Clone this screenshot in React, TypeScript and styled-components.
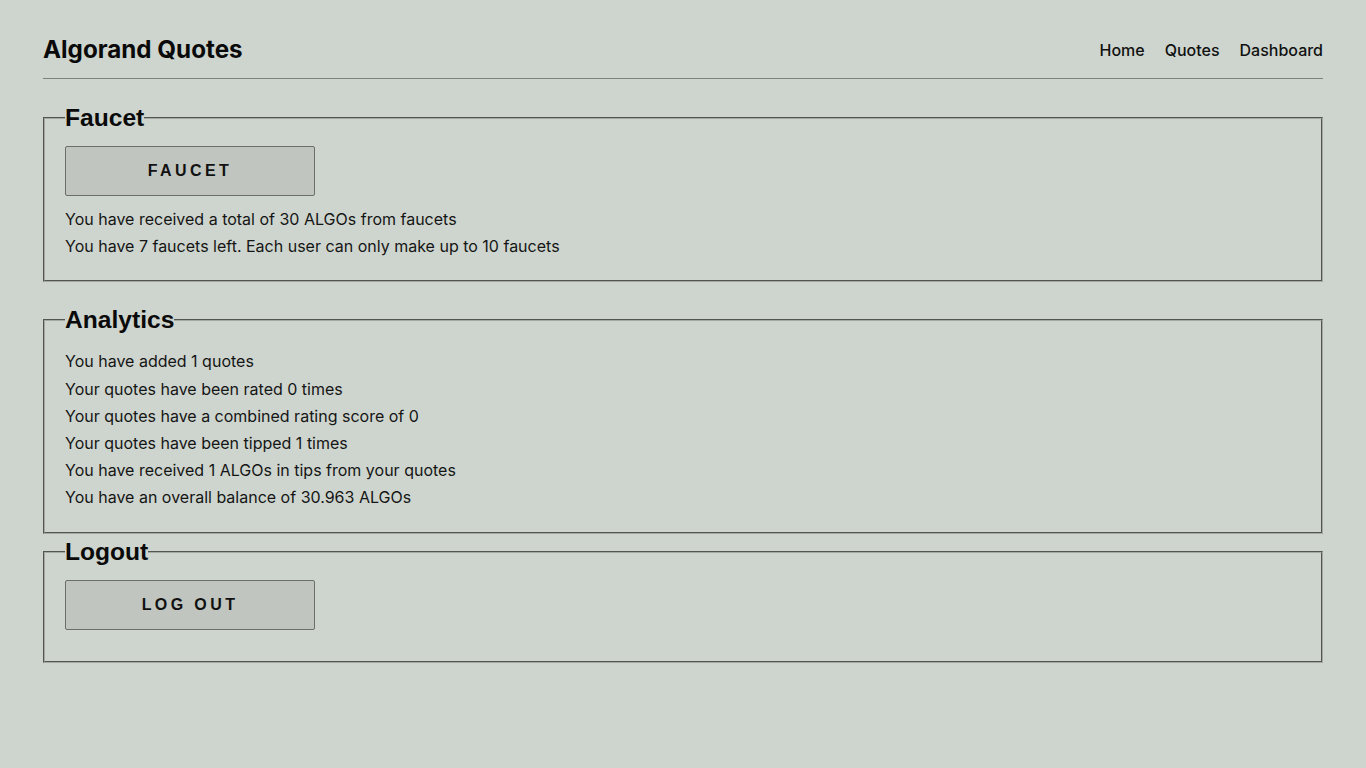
import * as React from 'react';
import styled, { createGlobalStyle } from 'styled-components';

const GlobalStyle = createGlobalStyle`
  html, body {
    margin: 0;
    padding: 0;
    background: #ced5ce;
  }
  body {
    font-family: Inter, "Noto Sans", sans-serif;
    color: #111;
  }
`;

const Page = styled.div`
  max-width: 1280px;
  margin: 0 auto;
  padding-top: 35px;
`;

const Header = styled.header`
  display: flex;
  align-items: center;
  justify-content: space-between;
  padding-bottom: 13px;
  border-bottom: 1px solid #7b817b;
  margin-bottom: 25px;
`;

const Brand = styled.h1`
  margin: 0;
  font-size: 24.2px;
  line-height: 30px;
  font-weight: 700;
  color: #0a0a0a;
`;

const Nav = styled.nav`
  display: flex;
  gap: 20px;
`;

const NavLink = styled.a`
  font-size: 16px;
  font-weight: 500;
  color: #111;
  text-decoration: none;
  cursor: pointer;
`;

const Section = styled.fieldset<{ $gap?: number; $bottom?: number }>`
  margin: 0 0 ${(p) => p.$gap ?? 24}px;
  padding: 14px 20px ${(p) => p.$bottom ?? 20}px;
  border: 2px groove #a3a9a2;
  min-width: 0;
`;

const Legend = styled.legend`
  padding: 0;
  font-family: "Liberation Sans", Arial, sans-serif;
  font-size: 24.6px;
  line-height: 28px;
  font-weight: 700;
  color: #0a0a0a;
`;

const ActionButton = styled.button`
  display: block;
  width: 250px;
  height: 50px;
  margin: 0 0 10px;
  background: #c0c6bf;
  border: 1px solid #6a6f69;
  border-radius: 2px;
  font-family: "Liberation Sans", Arial, sans-serif;
  font-size: 16px;
  font-weight: 700;
  letter-spacing: 3.4px;
  text-transform: uppercase;
  color: #111;
  cursor: pointer;
`;

const Line = styled.p`
  margin: 0;
  font-size: 16px;
  line-height: 1.7;
  color: #151515;
`;

const analytics = [
  'You have added 1 quotes',
  'Your quotes have been rated 0 times',
  'Your quotes have a combined rating score of 0',
  'Your quotes have been tipped 1 times',
  'You have received 1 ALGOs in tips from your quotes',
  'You have an overall balance of 30.963 ALGOs',
];

export default function App() {
  return (
    <>
      <GlobalStyle />
      <Page>
        <Header>
          <Brand>Algorand Quotes</Brand>
          <Nav>
            <NavLink>Home</NavLink>
            <NavLink>Quotes</NavLink>
            <NavLink>Dashboard</NavLink>
          </Nav>
        </Header>

        <Section>
          <Legend>Faucet</Legend>
          <ActionButton>Faucet</ActionButton>
          <Line>You have received a total of 30 ALGOs from faucets</Line>
          <Line>You have 7 faucets left. Each user can only make up to 10 faucets</Line>
        </Section>

        <Section $gap={4}>
          <Legend>Analytics</Legend>
          {analytics.map((text, index) => (
            <Line key={index}>{text}</Line>
          ))}
        </Section>

        <Section $bottom={21}>
          <Legend>Logout</Legend>
          <ActionButton>Log out</ActionButton>
        </Section>
      </Page>
    </>
  );
}
